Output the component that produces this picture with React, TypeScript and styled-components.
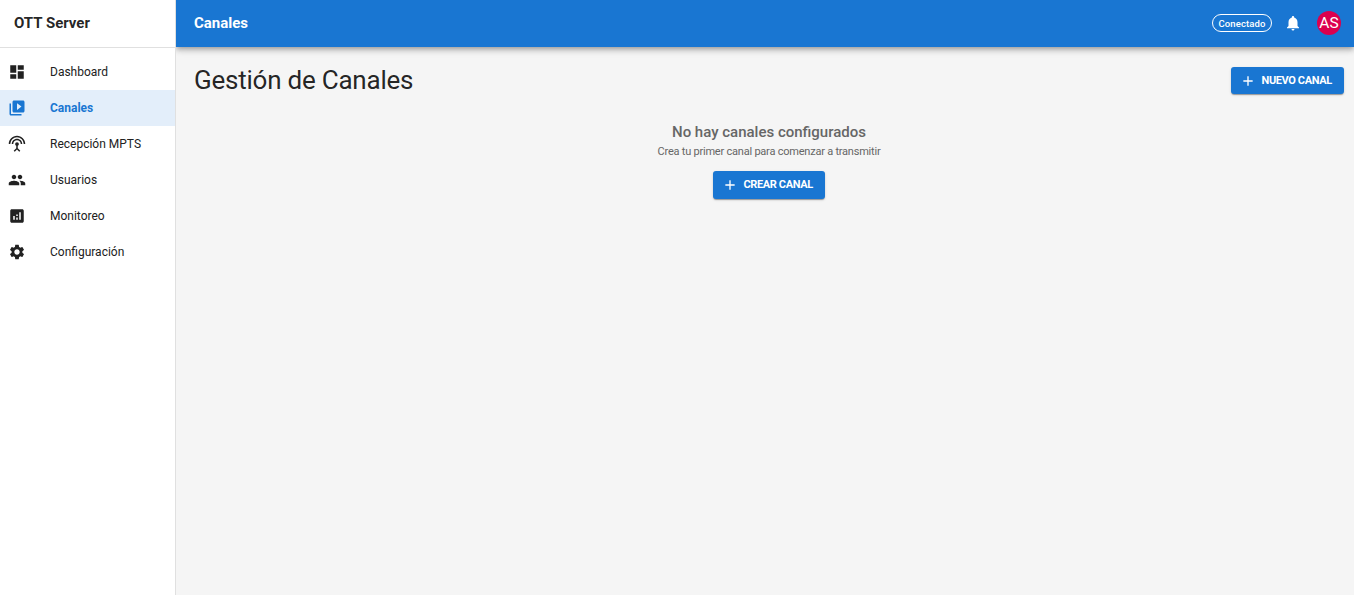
import React from "react";
import styled, { createGlobalStyle } from "styled-components";
import {
  MdAdd,
  MdAnalytics,
  MdDashboard,
  MdNotifications,
  MdPeople,
  MdSettings,
  MdSettingsInputAntenna,
  MdVideoLibrary,
} from "react-icons/md";

const GlobalStyle = createGlobalStyle`
  *, *::before, *::after { box-sizing: border-box; }
  body {
    margin: 0;
    background: #f5f5f5;
    color: rgba(0, 0, 0, 0.87);
    font-family: Roboto, "Liberation Sans", sans-serif;
  }
`;

const Layout = styled.div`
  display: flex;
  height: 100vh;
  overflow: hidden;
`;

const Sidebar = styled.aside`
  flex: 0 0 176px;
  background: #fff;
  border-right: 1px solid #e0e0e0;
`;

const Brand = styled.div`
  display: flex;
  align-items: center;
  height: 48px;
  padding: 0 14px 2px;
  border-bottom: 1px solid #e0e0e0;
  font-size: 15px;
  font-weight: 700;
  line-height: 24px;
  white-space: nowrap;
`;

const Nav = styled.nav`
  display: flex;
  flex-direction: column;
  padding-top: 6px;
`;

const NavItem = styled.a<{ $active?: boolean }>`
  display: flex;
  align-items: center;
  gap: 24px;
  height: 36px;
  padding-left: 8px;
  background: ${(p) => (p.$active ? "#e3eefa" : "transparent")};
  color: ${(p) => (p.$active ? "#1976d2" : "#212121")};
  font-size: 12px;
  font-weight: ${(p) => (p.$active ? 700 : 400)};
  white-space: nowrap;

  svg { flex: none; width: 18px; height: 18px; }
`;

const Main = styled.div`
  display: flex;
  flex: 1;
  flex-direction: column;
  min-width: 0;
`;

const AppBar = styled.header`
  display: flex;
  align-items: center;
  height: 47px;
  padding: 0 13px 1px 18px;
  background: #1976d2;
  color: #fff;
  box-shadow: 0 2px 4px -1px rgba(0, 0, 0, 0.2), 0 4px 5px rgba(0, 0, 0, 0.14),
    0 1px 10px rgba(0, 0, 0, 0.12);
  clip-path: inset(0 0 -16px 0);
`;

const BarTitle = styled.div`
  flex: 1;
  font-size: 15px;
  font-weight: 700;
`;

const StatusChip = styled.span`
  display: flex;
  align-items: center;
  justify-content: center;
  width: 60px;
  height: 18px;
  border: 1px solid #fff;
  border-radius: 9px;
  font-size: 9.5px;
  font-weight: 500;
  letter-spacing: 0.1px;
`;

const Bell = styled(MdNotifications)`
  width: 18px;
  height: 18px;
  margin: 0 15px 0 12px;
`;

const Avatar = styled.div`
  display: flex;
  align-items: center;
  justify-content: center;
  width: 24px;
  height: 24px;
  border-radius: 50%;
  background: #dc004e;
  font-size: 15.5px;
`;

const Content = styled.main`
  display: flex;
  flex-direction: column;
  padding: 20px 10px 0 18px;
`;

const PageHeader = styled.div`
  display: flex;
  align-items: flex-start;
  justify-content: space-between;
  height: 53px;
`;

const PageTitle = styled.h1`
  margin: -3px 0 0;
  font-size: 26px;
  font-weight: 400;
  line-height: 32px;
  letter-spacing: -0.23px;
`;

const Button = styled.button<{ $width: number; $height: number }>`
  display: flex;
  align-items: center;
  width: ${(p) => p.$width}px;
  height: ${(p) => p.$height}px;
  padding: 0 0 0 8.5px;
  border: 0;
  border-radius: 3px;
  background: #1976d2;
  color: #fff;
  font-family: inherit;
  font-size: 11px;
  font-weight: 700;
  letter-spacing: -0.38px;
  line-height: 13px;
  white-space: nowrap;
  box-shadow: 0 2px 1px -1px rgba(0, 0, 0, 0.2), 0 1px 1px rgba(0, 0, 0, 0.14),
    0 1px 3px rgba(0, 0, 0, 0.12);

  svg { flex: none; width: 16px; height: 16px; margin-right: 6px; }
`;

const ButtonLabel = styled.span`
  padding-bottom: 1px;
`;

const EmptyState = styled.section`
  display: flex;
  flex-direction: column;
  align-items: center;
  width: 1150px;
  color: #666;
`;

const EmptyTitle = styled.h2`
  margin: 0;
  font-size: 15px;
  font-weight: 500;
  line-height: 24px;
`;

const EmptyText = styled.p`
  margin: 0 0 12px;
  font-size: 11px;
  line-height: 15px;
  letter-spacing: -0.22px;
`;

const items = [
  { label: "Dashboard", Icon: MdDashboard },
  { label: "Canales", Icon: MdVideoLibrary, active: true },
  { label: "Recepción MPTS", Icon: MdSettingsInputAntenna },
  { label: "Usuarios", Icon: MdPeople },
  { label: "Monitoreo", Icon: MdAnalytics },
  { label: "Configuración", Icon: MdSettings },
];

export default function App() {
  return (
    <Layout>
      <GlobalStyle />
      <Sidebar>
        <Brand>OTT Server</Brand>
        <Nav>
          {items.map(({ label, Icon, active }) => (
            <NavItem key={label} $active={active}>
              <Icon />
              <span>{label}</span>
            </NavItem>
          ))}
        </Nav>
      </Sidebar>
      <Main>
        <AppBar>
          <BarTitle>Canales</BarTitle>
          <StatusChip>Conectado</StatusChip>
          <Bell />
          <Avatar>AS</Avatar>
        </AppBar>
        <Content>
          <PageHeader>
            <PageTitle>Gestión de Canales</PageTitle>
            <Button $width={113} $height={27}>
              <MdAdd />
              <ButtonLabel>NUEVO CANAL</ButtonLabel>
            </Button>
          </PageHeader>
          <EmptyState>
            <EmptyTitle>No hay canales configurados</EmptyTitle>
            <EmptyText>Crea tu primer canal para comenzar a transmitir</EmptyText>
            <Button $width={112} $height={28}>
              <MdAdd />
              <ButtonLabel>CREAR CANAL</ButtonLabel>
            </Button>
          </EmptyState>
        </Content>
      </Main>
    </Layout>
  );
}
